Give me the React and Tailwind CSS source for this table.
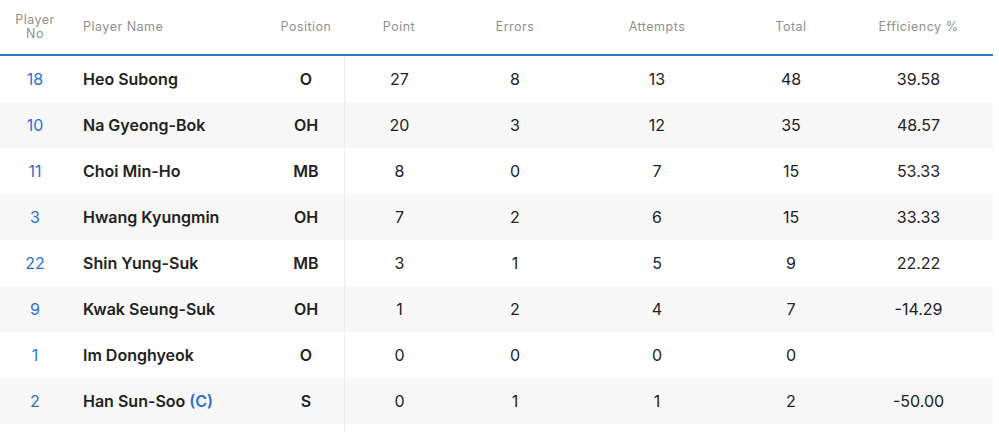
import React from 'react';

const players = [
  { no: 18, name: 'Heo Subong', pos: 'O', point: 27, errors: 8, attempts: 13, total: 48, eff: '39.58' },
  { no: 10, name: 'Na Gyeong-Bok', pos: 'OH', point: 20, errors: 3, attempts: 12, total: 35, eff: '48.57' },
  { no: 11, name: 'Choi Min-Ho', pos: 'MB', point: 8, errors: 0, attempts: 7, total: 15, eff: '53.33' },
  { no: 3, name: 'Hwang Kyungmin', pos: 'OH', point: 7, errors: 2, attempts: 6, total: 15, eff: '33.33' },
  { no: 22, name: 'Shin Yung-Suk', pos: 'MB', point: 3, errors: 1, attempts: 5, total: 9, eff: '22.22' },
  { no: 9, name: 'Kwak Seung-Suk', pos: 'OH', point: 1, errors: 2, attempts: 4, total: 7, eff: '-14.29' },
  { no: 1, name: 'Im Donghyeok', pos: 'O', point: 0, errors: 0, attempts: 0, total: 0, eff: '' },
  { no: 2, name: 'Han Sun-Soo', captain: true, pos: 'S', point: 0, errors: 1, attempts: 1, total: 2, eff: '-50.00' },
];

const cols = 'grid grid-cols-[70px_198px_76px_110px_122px_162px_106px_149px]';

export default function App() {
  return (
    <div className="w-[999px] h-[432px] overflow-hidden bg-white font-['Inter',sans-serif]">
      <div className="w-[993px]">
        <div className={`${cols} h-[56px] items-center text-[12.5px] tracking-[0.5px] text-[#8f8f8f] border-b-2 border-[#2f7bbf]`}>
          <div className="text-center leading-[14px]">Player<br />No</div>
          <div className="pl-[13px]">Player Name</div>
          <div className="text-center">Position</div>
          <div className="text-center">Point</div>
          <div className="text-center">Errors</div>
          <div className="text-center">Attempts</div>
          <div className="text-center">Total</div>
          <div className="text-center">Efficiency %</div>
        </div>
        {players.map((p, i) => (
          <div
            key={p.no}
            className={`${cols} h-[46px] items-center text-[16px] text-[#222] ${i % 2 === 1 ? 'bg-[#f7f7f7]' : 'bg-white'}`}
          >
            <div className="text-center text-[#2a6fd6]">{p.no}</div>
            <div className="pl-[13px] font-semibold">
              {p.name}
              {p.captain && <span className="text-[#2a6fd6]"> (C)</span>}
            </div>
            <div className="text-center font-semibold">{p.pos}</div>
            <div className="text-center h-full flex items-center justify-center border-l border-[#ececec]">{p.point}</div>
            <div className="text-center">{p.errors}</div>
            <div className="text-center">{p.attempts}</div>
            <div className="text-center">{p.total}</div>
            <div className="text-center">{p.eff}</div>
          </div>
        ))}
        <div className="ml-[344px] h-[10px] border-l border-[#ececec]" />
      </div>
    </div>
  );
}
